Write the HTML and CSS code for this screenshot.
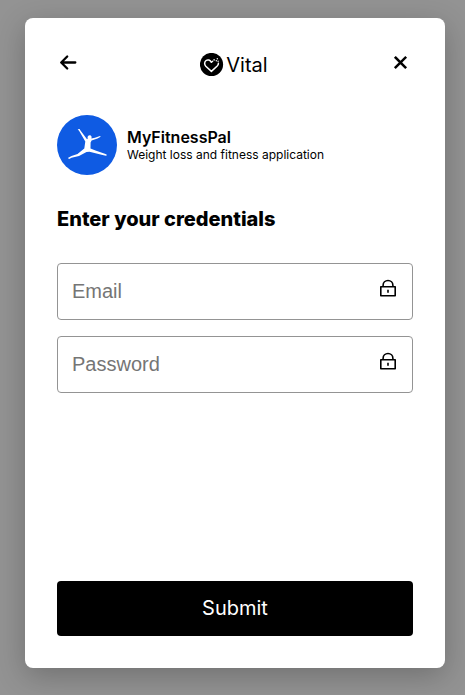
FILE: index.html
```html
<!DOCTYPE html>
<html lang="en">
<head>
<meta charset="utf-8">
<title>Vital</title>
<link rel="stylesheet" href="styles.css">
</head>
<body>
<main class="modal">
  <header class="topbar">
    <button class="icon-btn" type="button" aria-label="Back">
      <svg width="24" height="24" viewBox="0 0 24 24" fill="none" stroke="#000" stroke-width="2.300" stroke-linecap="round" stroke-linejoin="round"><path d="M18.300 12.500H4.500M10.200 6.500L4.200 12.500l6 6"/></svg>
    </button>
    <div class="brand">
      <svg width="24" height="24" viewBox="0 0 24 24"><circle cx="11.500" cy="11.500" r="11.600"/><path d="M11.400 9.300C10.200 6.900 7.800 6.300 6.100 7.500 4.200 9 4.200 11.500 5.800 13.200L11.400 18.400 17.200 13C18.200 12 18.600 11.200 18.400 10.200M11.400 9.300L12.600 8.200" fill="none" stroke="#fff" stroke-width="1.500" stroke-linecap="round" stroke-linejoin="round"/><g fill="#fff"><circle cx="14.100" cy="6.900" r=".8"/><circle cx="17.300" cy="5.800" r=".7"/><circle cx="16.300" cy="7.700" r=".7"/><circle cx="18.100" cy="8.300" r=".7"/></g></svg>
      <span>Vital</span>
    </div>
    <button class="icon-btn" type="button" aria-label="Close">
      <svg width="24" height="24" viewBox="0 0 24 24" fill="none" stroke="#000" stroke-width="2.500" stroke-linecap="square"><path d="M6.700 7.700l9.600 9.600M16.300 7.700l-9.600 9.600"/></svg>
    </button>
  </header>

  <section class="provider">
    <svg class="avatar" width="60" height="60" viewBox="0 0 60 60"><circle cx="30" cy="30" r="30" fill="#0f5be3"/><path fill="#fff" d="M20.700 14.200L22.600 14 23.500 15.500 30 24.200 30.700 23.700C30.200 21.700 31.100 20.200 32.800 20.200 34.400 20.300 35 21.800 34.400 23.500L38 22.700 43 21.100 43.700 21.700 40.500 23.500 34.600 25.600 33.600 27.500 33.500 33.400 38.500 35.600 48.500 38.900 50.100 40 49 40.800 45.500 40.100 32.500 36.800 29.500 36.900 22 41 14.500 42.800 12.200 43.900 10.800 42.900 14.500 40.900 20.500 38.900 27.300 33.600 28.300 26.500 22.200 16Z"/></svg>
    <div>
      <div class="name">MyFitnessPal</div>
      <div class="about">Weight loss and fitness application</div>
    </div>
  </section>

  <h1 class="title">Enter your credentials</h1>

  <form class="form">
    <label class="field">
      <input type="email" placeholder="Email">
      <svg width="18" height="20" viewBox="0 0 18 20" fill="none" stroke="#000" stroke-width="1.600" stroke-linejoin="round"><path d="M1.800 8.800h14.400v9H1.800zM4.100 8.600V7.200a4.900 4.700 0 0 1 9.800 0v1.400M9 11.800v3"/></svg>
    </label>
    <label class="field">
      <input type="password" placeholder="Password">
      <svg width="18" height="20" viewBox="0 0 18 20" fill="none" stroke="#000" stroke-width="1.600" stroke-linejoin="round"><path d="M1.800 8.800h14.400v9H1.800zM4.100 8.600V7.200a4.900 4.700 0 0 1 9.800 0v1.400M9 11.800v3"/></svg>
    </label>
    <button class="submit" type="button">Submit</button>
  </form>
</main>
</body>
</html>
```
FILE: styles.css
```css
* { box-sizing: border-box; }
body {
  margin: 0;
  height: 695px;
  padding: 18px 20px 27px 25px;
  overflow: hidden;
  background: #939393;
  color: #000;
  font-family: Inter, sans-serif;
}
.modal {
  display: flex;
  flex-direction: column;
  height: 650px;
  padding: 32px;
  border-radius: 8px;
  background: #fff;
  box-shadow: 0 8px 30px rgba(0, 0, 0, .24);
}
.topbar {
  display: flex;
  justify-content: space-between;
  height: 30px;
}
.icon-btn {
  width: 24px;
  height: 24px;
  padding: 0;
  border: 0;
  background: none;
}
.icon-btn svg { display: block; }
.brand {
  display: flex;
  align-items: center;
  gap: 2px;
  height: 30px;
  padding-right: 2px;
  font-size: 20px;
}
.provider {
  display: flex;
  align-items: center;
  gap: 10px;
  margin-top: 35px;
  height: 60px;
}
.avatar { flex: none; }
.name {
  font-size: 16px;
  font-weight: 600;
  line-height: 18px;
}
.about {
  padding-top: 1px;
  font-size: 12px;
  line-height: 15px;
}
.title {
  margin: 32px 0 0;
  font-size: 20px;
  font-weight: 800;
  line-height: 24px;
}
.form {
  display: flex;
  flex: 1;
  flex-direction: column;
  gap: 16px;
  margin-top: 32px;
}
.field {
  display: flex;
  justify-content: space-between;
  height: 57px;
  padding: 0 15px 0 14px;
  border: 1px solid #949494;
  border-radius: 4px;
}
.field svg { margin-top: 14px; }
.field input {
  min-width: 0;
  flex: 1;
  padding: 0;
  border: 0;
  outline: 0;
  background: none;
  font: 20px "Liberation Sans", Arial, sans-serif;
}
.field input::placeholder { color: #757575; }
.submit {
  height: 55px;
  margin-top: auto;
  padding: 0 0 2px;
  border: 0;
  border-radius: 4px;
  background: #000;
  color: #fff;
  font: 20px Inter, sans-serif;
}
```
